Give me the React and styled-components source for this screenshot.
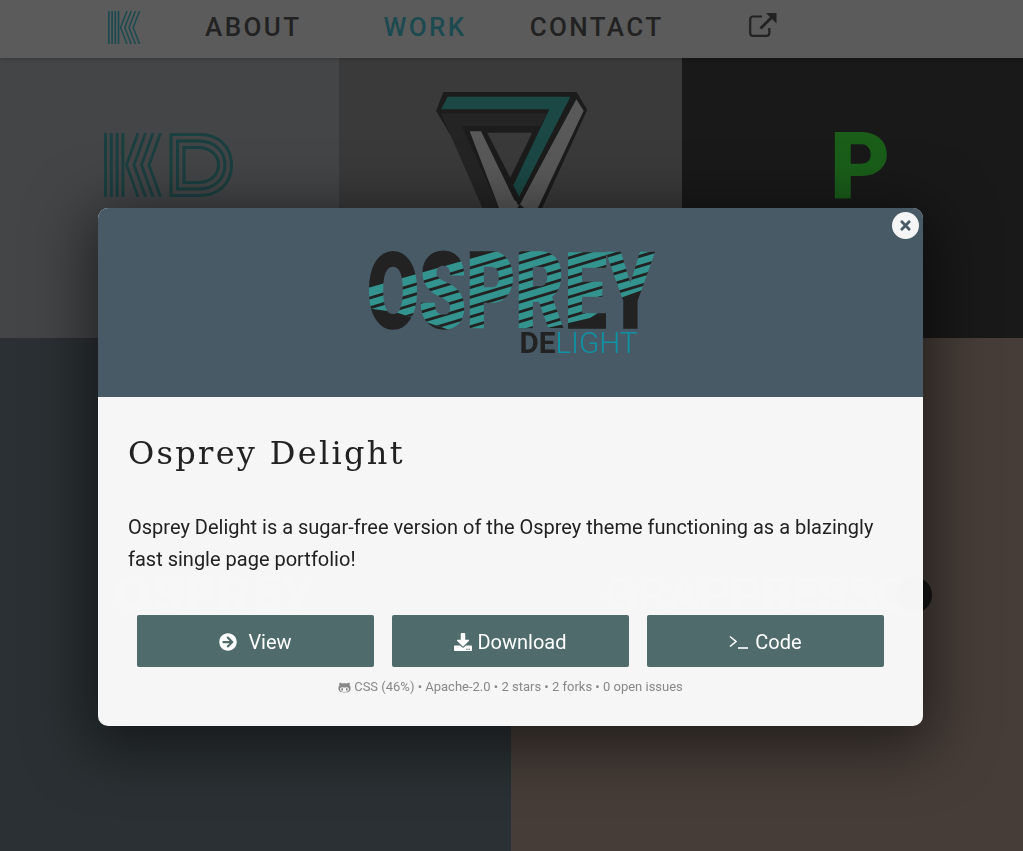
import React from "react";
import styled, { createGlobalStyle } from "styled-components";
import { FaArrowCircleRight, FaDownload, FaGithubAlt, FaTimes } from "react-icons/fa";

const Global = createGlobalStyle`
  html, body { margin: 0; padding: 0; height: 100%; overflow: hidden; background: #2a3033; }
  * { box-sizing: border-box; }
  body { font-family: Roboto, "Liberation Sans", sans-serif; }
`;

const Page = styled.div`
  width: 1023px;
  height: 851px;
  display: flex;
  flex-direction: column;
  overflow: hidden;
`;
const Nav = styled.nav`
  height: 58px;
  flex: none;
  background: #5b5b5b;
  display: flex;
  align-items: center;
  padding-left: 108px;
  position: relative;
  z-index: 1;
  box-shadow: 0 1px 4px rgba(0,0,0,.2);
`;
const NavBrand = styled.a`
  display: flex;
  margin-top: -4px;
`;
const NavLink = styled.a`
  font-size: 26px;
  font-weight: 500;
  letter-spacing: 2.4px;
  line-height: 50px;
  margin-top: -5px;
  color: ${p => (p.$active ? "#1b4a50" : "#222222")};
  margin-left: ${p => p.$left}px;
  white-space: nowrap;
`;
const IconLink = styled.a`
  margin-left: ${p => p.$left}px;
  display: flex;
  margin-top: -9px;
  color: #222;
`;
const TopRow = styled.div`
  height: 280px;
  flex: none;
  display: grid;
  grid-template-columns: 339px 343px 341px;
`;
const BottomRow = styled.div`
  flex: 1;
  display: grid;
  grid-template-columns: 511px 512px;
`;
const Tile = styled.div`
  background: ${p => p.$bg};
  display: flex;
  justify-content: center;
  align-items: ${p => (p.$top ? "flex-start" : "center")};
  padding-top: ${p => p.$top || 0}px;
  padding-bottom: ${p => p.$pb || 0}px;
  position: relative;
  overflow: hidden;
`;
const KDWrap = styled.div`
  display: flex;
  margin-right: 1px;
`;
const TriWrap = styled.div`
  display: flex;
`;
const PLetter = styled.span`
  font-family: Roboto, sans-serif;
  font-weight: 900;
  font-size: 93px;
  line-height: 1;
  color: #1a5e1a;
  margin-left: 15px;
`;
const GhostOsprey = styled.span`
  font-family: Roboto, sans-serif;
  font-weight: 700;
  font-size: 50px;
  letter-spacing: 2px;
  color: rgba(255,255,255,.18);
  margin-right: 80px;
`;
const GhostGrappresso = styled.div`
  display: flex;
  align-items: center;
  margin-left: 3px;
`;
const GhostWord = styled.span`
  font-family: Roboto, sans-serif;
  font-weight: 500;
  font-size: 48px;
  color: rgba(255,255,255,.18);
`;
const GhostDot = styled.span`
  width: 36px;
  height: 36px;
  border-radius: 50%;
  background: #141414;
  margin-left: -13px;
`;

const Overlay = styled.div`
  position: fixed;
  inset: 0;
  padding: 208px 0 0 98px;
  z-index: 5;
`;
const Modal = styled.section`
  width: 825px;
  height: 518px;
  border-radius: 10px;
  background: rgba(251,251,251,.975);
  box-shadow: 0 12px 60px 10px rgba(0,0,0,.5);
  display: flex;
  flex-direction: column;
  position: relative;
  overflow: hidden;
`;
const Header = styled.header`
  height: 189px;
  flex: none;
  background: #475a66;
  display: flex;
  align-items: flex-start;
  justify-content: center;
  padding-top: 32px;
  padding-right: 2px;
`;
const Close = styled.button`
  position: absolute;
  top: 4px;
  right: 4px;
  width: 27px;
  height: 27px;
  padding: 0;
  border: 0;
  border-radius: 50%;
  background: #f5f5f5;
  color: #475a66;
  display: flex;
  align-items: center;
  justify-content: center;
  font-size: 15px;
`;
const Body = styled.div`
  flex: 1;
  padding: 33px 30px 0;
  display: flex;
  flex-direction: column;
`;
const Title = styled.h2`
  margin: 0;
  font-family: "DejaVu Serif", serif;
  font-weight: 400;
  font-size: 32px;
  line-height: 46px;
  letter-spacing: 2.3px;
  color: #222;
`;
const Description = styled.p`
  margin: 35px 0 0;
  font-size: 20px;
  line-height: 32px;
  color: #222;
`;
const Buttons = styled.div`
  display: flex;
  gap: 18px;
  justify-content: center;
  margin-top: 40px;
`;
const Btn = styled.a`
  width: 237px;
  height: 52px;
  padding-top: 2px;
  background: #4f6b6b;
  color: #fff;
  border-radius: 2px;
  display: flex;
  align-items: center;
  justify-content: center;
  gap: ${p => p.$gap}px;
  font-size: 20px;
`;
const Meta = styled.div`
  margin-top: 12px;
  text-align: center;
  font-size: 13px;
  line-height: 16px;
  color: #888;
  display: flex;
  align-items: center;
  justify-content: center;
  gap: 3px;
`;

const KShape = () => (
  <>
    <path d="M1.5 0V64M7.3 0V64M13.1 0V64M18.9 0V64" strokeWidth="2.9" />
    <path d="M34 0L22.5 32L34 64M41.5 0L30 32L41.5 64M49 0L37.5 32L49 64M56.5 0L45 32L56.5 64" strokeWidth="2.7" />
  </>
);

const NavLogo = () => (
  <svg width="33" height="33" viewBox="0 0 59 64" preserveAspectRatio="none" fill="none" stroke="#1b4a50" aria-hidden="true">
    <KShape />
  </svg>
);

const KDLogo = () => (
  <svg width="130" height="64" viewBox="0 0 130 64" fill="none" stroke="#1a3f40" aria-hidden="true">
    <KShape />
    <path d="M67 1.5H96C115 1.5 127.5 14 127.5 32S115 62.5 96 62.5H67Z" strokeWidth="3" />
    <path d="M73.5 8H95C110 8 121 18 121 32S110 56 95 56H73.5Z" strokeWidth="3" />
    <path d="M80 14.5H94C105 14.5 114.5 21 114.5 32S105 49.5 94 49.5H80Z" strokeWidth="3" />
  </svg>
);

const TriangleLogo = () => (
  <svg width="180" height="146" viewBox="0 36 540 438" strokeLinejoin="round" aria-hidden="true">
    <path d="M72 40H462L492 90L345 410H240L52 92Z" fill="#1c1c1c" stroke="#1c1c1c" strokeWidth="12" />
    <path d="M60 100H378L358 138H122L252 420H200Z" fill="#242424" />
    <path d="M146 154H180L280 360L296 372L270 420H248Z" fill="#595959" />
    <path d="M192 154H340L268 302Z" fill="#3a3a3a" stroke="#1c1c1c" strokeWidth="8" />
    <path d="M466 58L488 92L338 410L296 372Z" fill="#595959" />
    <path d="M80 50H448L295 350L277 316L385 88H60Z" fill="#1b4845" />
    <path d="M461 50L293 368" fill="none" stroke="#1c1c1c" strokeWidth="12" strokeLinecap="round" />
  </svg>
);

const ShareIcon = () => (
  <svg width="28" height="24" viewBox="0 0 28 24" fill="none" stroke="#222" strokeWidth="2.2" aria-hidden="true">
    <path d="M13 3.5H4C2.4 3.5 1.2 4.7 1.2 6.3V20C1.2 21.6 2.4 22.8 4 22.8H17.5C19.1 22.8 20.3 21.6 20.3 20V15" />
    <path d="M11.5 15.5L24 3" strokeWidth="2.8" />
    <path d="M17 0H27.5V10.5Z" fill="#222" stroke="none" />
  </svg>
);

const TerminalIcon = () => (
  <svg width="20" height="14" viewBox="0 0 20 14" fill="none" stroke="#fff" strokeWidth="1.6" aria-hidden="true">
    <path d="M1 1.5L7 6.5L1 11.5" />
    <path d="M9 13H19" />
  </svg>
);

const stripeIntercepts = Array.from({ length: 13 }, (_, i) => 64 + i * 9.8);

const OspreyLogo = () => (
  <svg width="320" height="125" viewBox="0 0 320 125" style={{ display: "block" }}>
    <defs>
      <clipPath id="ospreyBand">
        <path d="M0 53L320 -38V40L273 57L240 78L197 88L100 90L45 72L0 66Z" />
      </clipPath>
      <pattern id="ospreyFill" patternUnits="userSpaceOnUse" x="0" y="0" width="320" height="125">
        <rect width="320" height="125" fill="#222222" />
        <g clipPath="url(#ospreyBand)">
          <rect width="320" height="125" fill="#33938f" />
          {stripeIntercepts.map(c => (
            <line key={c} x1="0" y1={c} x2="320" y2={c - 96} stroke="#222222" strokeWidth="2.8" />
          ))}
        </g>
      </pattern>
    </defs>
    <text x="17" y="88" fontFamily="Roboto, sans-serif" fontWeight="900" fontSize="106" textLength="287" lengthAdjust="spacingAndGlyphs" fill="url(#ospreyFill)" stroke="url(#ospreyFill)" strokeWidth="1.5">OSPREY</text>
    <text x="169.5" y="113" fontFamily="Roboto, sans-serif" fontSize="30" textLength="118" lengthAdjust="spacingAndGlyphs">
      <tspan fontWeight="700" fill="#222">DE</tspan>
      <tspan fontWeight="300" fill="#0e93a5">LIGHT</tspan>
    </text>
  </svg>
);

export default function App() {
  return (
    <>
      <Global />
      <Page>
        <Nav>
          <NavBrand><NavLogo /></NavBrand>
          <NavLink $left={64}>ABOUT</NavLink>
          <NavLink $active $left={82}>WORK</NavLink>
          <NavLink $left={63}>CONTACT</NavLink>
          <IconLink $left={85}><ShareIcon /></IconLink>
        </Nav>
        <TopRow>
          <Tile $bg="#434547" $pb={66}><KDWrap><KDLogo /></KDWrap></Tile>
          <Tile $bg="#3a3a3a" $top={34}><TriWrap><TriangleLogo /></TriWrap></Tile>
          <Tile $bg="#191919" $pb={64}><PLetter>P</PLetter></Tile>
        </TopRow>
        <BottomRow>
          <Tile $bg="#2a3033">
            <GhostOsprey>OSPREY</GhostOsprey>
          </Tile>
          <Tile $bg="#463d38">
            <GhostGrappresso>
              <GhostWord>GRAPPRESSO</GhostWord>
              <GhostDot />
            </GhostGrappresso>
          </Tile>
        </BottomRow>
      </Page>
      <Overlay>
        <Modal>
          <Header><OspreyLogo /></Header>
          <Close aria-label="Close"><FaTimes /></Close>
          <Body>
            <Title>Osprey Delight</Title>
            <Description>
              Osprey Delight is a sugar-free version of the Osprey theme functioning as a blazingly fast single page portfolio!
            </Description>
            <Buttons>
              <Btn $gap={11}><FaArrowCircleRight size={18} />View</Btn>
              <Btn $gap={5}><FaDownload size={18} />Download</Btn>
              <Btn $gap={6}><TerminalIcon />Code</Btn>
            </Buttons>
            <Meta><FaGithubAlt size={13} />CSS (46%) • Apache-2.0 • 2 stars • 2 forks • 0 open issues</Meta>
          </Body>
        </Modal>
      </Overlay>
    </>
  );
}
